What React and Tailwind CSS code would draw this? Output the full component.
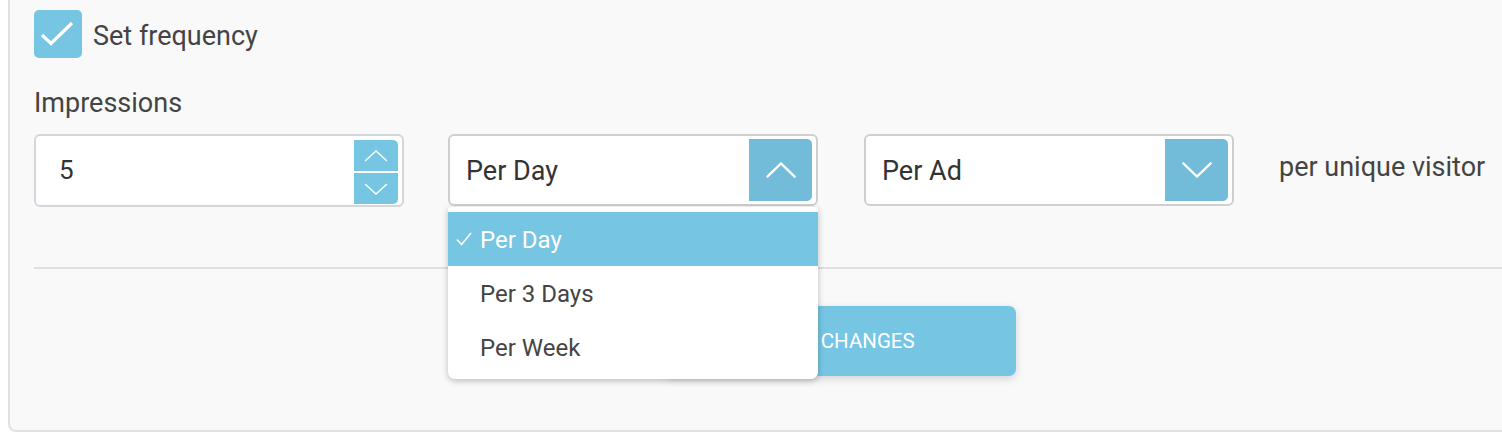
import React from "react";

const Chevron = ({ up, className }) => (
  <svg viewBox="0 0 30 16" className={className} fill="none" stroke="white" strokeWidth="2.4" strokeLinecap="square">
    {up ? <polyline points="1.5,14.5 15,1.5 28.5,14.5" /> : <polyline points="1.5,1.5 15,14.5 28.5,1.5" />}
  </svg>
);

const ThinChevron = ({ up }) => (
  <svg viewBox="0 0 24 12" className="w-[24px] h-[12px]" fill="none" stroke="white" strokeWidth="1.4">
    {up ? <polyline points="1,11 12,1 23,11" /> : <polyline points="1,1 12,11 23,1" />}
  </svg>
);

export default function App() {
  return (
    <div className="w-[1502px] h-[432px] bg-white overflow-hidden font-['Roboto',sans-serif] text-[#444]">
      <div className="ml-2 w-[1520px] h-[432px] bg-[#f9f9f9] border-l-2 border-b-2 border-[#e2e2e2] rounded-bl-lg pl-[24px] pt-[10px]">
        {/* checkbox row */}
        <div className="flex items-center gap-[11px]">
          <div className="w-[48px] h-[48px] rounded-[5px] bg-[#75c5e3] flex items-center justify-center">
            <svg viewBox="0 0 48 48" className="w-[48px] h-[48px]" fill="none" stroke="white" strokeWidth="3.2">
              <polyline points="8,25 17,33.5 38,13" />
            </svg>
          </div>
          <span className="pt-[3px] text-[27px] leading-[32px] text-[#444]">Set frequency</span>
        </div>

        <div className="mt-[28px] pt-[1px] text-[27px] leading-[32px] text-[#444]">Impressions</div>

        {/* inputs row */}
        <div className="mt-[15px] flex items-start">
          <div className="relative w-[370px] h-[73px] bg-white border-2 border-[#d3d6da] rounded-[6px] flex items-center pl-[23px]">
            <span className="text-[26px] text-[#333]">5</span>
            <div className="absolute right-[4px] top-[4px] flex flex-col gap-[2px]">
              <div className="w-[44px] h-[31px] bg-[#75c5e3] rounded-tr-[5px] flex items-center justify-center">
                <ThinChevron up />
              </div>
              <div className="w-[44px] h-[31px] bg-[#75c5e3] rounded-br-[5px] flex items-center justify-center">
                <ThinChevron />
              </div>
            </div>
          </div>

          <div className="relative ml-[44px] w-[370px]">
            <div className="h-[72px] bg-white border-2 border-[#cfcfcf] rounded-[6px] flex items-center justify-between pl-[16px] pr-[4px]">
              <span className="pt-[2px] text-[27px] text-[#333]">Per Day</span>
              <div className="w-[63px] h-[62px] bg-[#73bcd9] rounded-r-[5px] flex items-center justify-center">
                <Chevron up className="w-[30px] h-[16px]" />
              </div>
            </div>
            <div className="absolute left-0 top-[73px] z-10 w-[370px] bg-white rounded-b-[7px] rounded-t-[3px] shadow-[0_2px_6px_rgba(0,0,0,0.25)] py-[5px]">
              <div className="h-[54px] bg-[#75c5e3] flex items-center text-white">
                <span className="w-[32px] pl-[8px] flex items-center">
                  <svg viewBox="0 0 16 14" className="w-[16px] h-[14px]" fill="none" stroke="white" strokeWidth="1.6">
                    <polyline points="1,7.5 5.5,12.5 15,1" />
                  </svg>
                </span>
                <span className="pt-[2px] text-[24px]">Per Day</span>
              </div>
              <div className="h-[54px] flex items-center pl-[32px] pt-[2px] text-[24px] text-[#444]">Per 3 Days</div>
              <div className="h-[54px] flex items-center pl-[32px] pt-[2px] text-[24px] text-[#444]">Per Week</div>
            </div>
          </div>

          <div className="ml-[46px] w-[370px] h-[72px] bg-white border-2 border-[#cfcfcf] rounded-[6px] flex items-center justify-between pl-[16px] pr-[4px]">
            <span className="pt-[2px] text-[27px] text-[#333]">Per Ad</span>
            <div className="w-[63px] h-[62px] bg-[#73bcd9] rounded-r-[5px] flex items-center justify-center">
              <Chevron className="w-[30px] h-[16px]" />
            </div>
          </div>

          <div className="ml-[45px] h-[66px] flex items-center text-[27px] text-[#444]">per unique visitor</div>
        </div>

        <div className="mt-[60px] h-[2px] bg-[#e0e0e0]" />

        <div className="mt-[37px] ml-[631px] w-[351px] h-[70px] rounded-[7px] bg-[#75c5e3] shadow-[0_3px_8px_rgba(0,0,0,0.15)] flex items-center justify-center text-white text-[20.5px]">
          SAVE CHANGES
        </div>
      </div>
    </div>
  );
}
